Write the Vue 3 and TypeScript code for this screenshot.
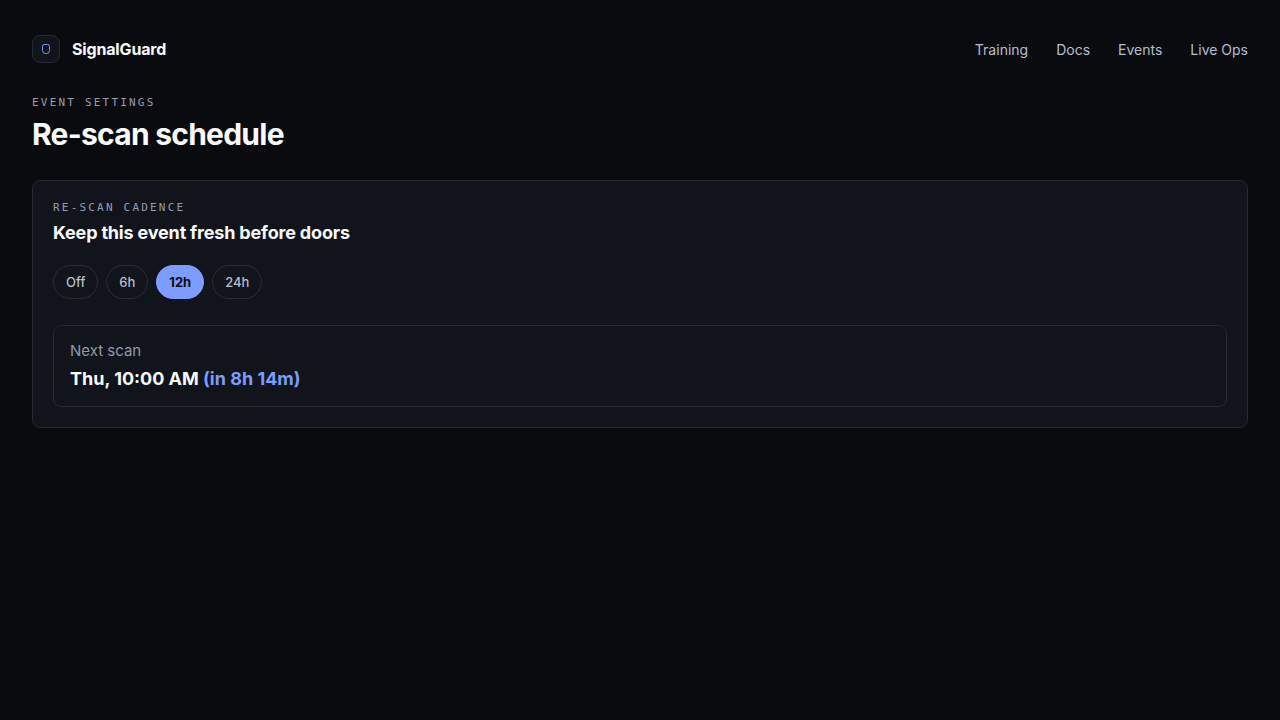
<script setup lang="ts">
import { ref } from 'vue'

const links: string[] = ['Training', 'Docs', 'Events', 'Live Ops']
const cadences: string[] = ['Off', '6h', '12h', '24h']
const selected = ref<string>('12h')
</script>

<template>
  <div class="page">
    <header class="topbar">
      <a class="brand" href="#">
        <span class="logo">
          <svg viewBox="0 0 8 10" width="8" height="10" fill="none" stroke="currentColor" aria-hidden="true">
            <path d="M2.5 0.5h3a2 2 0 0 1 2 2v4a3 3 0 0 1-3 3h-1a3 3 0 0 1-3-3v-4a2 2 0 0 1 2-2z" />
          </svg>
        </span>
        <span>SignalGuard</span>
      </a>
      <nav class="nav">
        <a v-for="link in links" :key="link" href="#">{{ link }}</a>
      </nav>
    </header>
    <main>
      <p class="eyebrow">EVENT SETTINGS</p>
      <h1>Re-scan schedule</h1>
      <section class="card">
        <p class="eyebrow">RE-SCAN CADENCE</p>
        <h2>Keep this event fresh before doors</h2>
        <div class="pills" role="group" aria-label="Re-scan cadence">
          <button
            v-for="c in cadences"
            :key="c"
            type="button"
            class="pill"
            :class="{ active: c === selected }"
            :aria-pressed="c === selected"
            @click="selected = c"
          >{{ c }}</button>
        </div>
        <div class="next">
          <p class="label">Next scan</p>
          <p class="time">Thu, 10:00 AM <span>(in 8h 14m)</span></p>
        </div>
      </section>
    </main>
  </div>
</template>

<style>
html {
  background: #0a0b0f;
}
</style>

<style scoped>
.page {
  padding: 32px;
  font-family: Inter, "Liberation Sans", sans-serif;
  color: #f8fafc;
}
p, h1, h2 {
  margin: 0;
}
.topbar {
  display: flex;
  align-items: center;
  justify-content: space-between;
  height: 34px;
  margin-bottom: 28px;
}
.brand {
  display: flex;
  align-items: center;
  gap: 12px;
  color: #f8fafc;
  font-size: 16px;
  font-weight: 700;
  letter-spacing: -0.01em;
  text-decoration: none;
}
.logo {
  box-sizing: border-box;
  display: flex;
  align-items: center;
  justify-content: center;
  width: 28px;
  height: 28px;
  border: 1px solid #252a33;
  border-radius: 8px;
  background: #11141b;
  color: #7c9cff;
}
.nav {
  display: flex;
  gap: 28px;
  padding-top: 2px;
}
.nav a {
  color: #b6bfce;
  font-size: 14px;
  line-height: 20px;
  text-decoration: none;
}
.eyebrow {
  font-family: "DejaVu Sans Mono", monospace;
  font-size: 11px;
  line-height: 18px;
  letter-spacing: 0.2em;
  color: #949eb0;
}
h1 {
  margin-top: 4px;
  font-size: 30px;
  line-height: 36px;
  font-weight: 700;
  letter-spacing: -0.025em;
}
.card {
  margin-top: 28px;
  padding: 18px 20px 20px;
  border: 1px solid #252a33;
  border-radius: 8px;
  background: #11141b;
}
h2 {
  margin-top: 2px;
  font-size: 18px;
  line-height: 28px;
  font-weight: 700;
  letter-spacing: -0.01em;
}
.pills {
  display: flex;
  flex-wrap: wrap;
  gap: 8px;
  margin-top: 18px;
}
.pill {
  padding: 8px 12px;
  border: 1px solid #282c35;
  border-radius: 17px;
  background: transparent;
  color: #b6bfce;
  font-family: inherit;
  font-size: 13px;
  line-height: 16px;
  font-weight: 500;
}
.pill.active {
  border-color: #7c9cff;
  background: #7c9cff;
  color: #0a0b0f;
  font-weight: 700;
}
.next {
  margin-top: 26px;
  padding: 12px 16px;
  border: 1px solid #252a33;
  border-radius: 8px;
}
.label {
  font-size: 15px;
  line-height: 26px;
  color: #8f99a9;
}
.time {
  font-size: 18px;
  line-height: 30px;
  font-weight: 700;
}
.time span {
  color: #7c9cff;
}
</style>
